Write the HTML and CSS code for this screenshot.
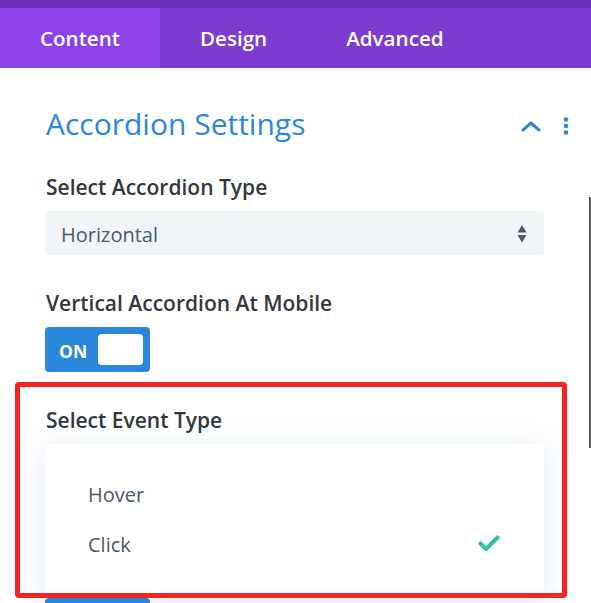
FILE: index.html
```html
<!DOCTYPE html>
<html lang="en">
<head>
<meta charset="utf-8">
<title>Accordion Settings</title>
<link rel="stylesheet" href="styles.css">
</head>
<body>
<div class="topstrip"></div>
<nav class="tabs">
  <div class="tab active">Content</div>
  <div class="tab">Design</div>
  <div class="tab">Advanced</div>
</nav>
<main class="panel">
  <header class="section-head">
    <h2 class="section-title">Accordion Settings</h2>
    <div class="head-icons">
      <svg class="chev" width="20" height="12" viewBox="0 0 20 12"><path d="M2 10 L10 3 L18 10" fill="none" stroke="#2b87da" stroke-width="3" stroke-linecap="round" stroke-linejoin="round"/></svg>
      <svg class="dots" width="6" height="18" viewBox="0 0 6 18"><circle cx="3" cy="2.5" r="2.3" fill="#2b87da"/><circle cx="3" cy="9" r="2.3" fill="#2b87da"/><circle cx="3" cy="15.5" r="2.3" fill="#2b87da"/></svg>
    </div>
  </header>

  <section class="field">
    <div class="label">Select Accordion Type</div>
    <div class="select">
      <span class="select-value">Horizontal</span>
      <svg class="updown" width="10" height="20" viewBox="0 0 10 20"><path d="M5 1 L9.5 8.5 L0.5 8.5 Z" fill="#4c5866"/><path d="M0.5 11 L9.5 11 L5 18.5 Z" fill="#4c5866"/></svg>
    </div>
  </section>

  <section class="field">
    <div class="label">Vertical Accordion At Mobile</div>
    <div class="toggle">
      <span class="toggle-text">ON</span>
      <span class="knob"></span>
    </div>
  </section>

  <section class="field">
    <div class="label">Select Event Type</div>
    <ul class="dropdown">
      <li class="option">Hover</li>
      <li class="option selected">Click
        <svg class="check" width="22" height="17" viewBox="0 0 22 17"><path d="M2.5 8.5 L8 14 L19.5 2.5" fill="none" stroke="#2ec4a6" stroke-width="4.2" stroke-linecap="round" stroke-linejoin="round"/></svg>
      </li>
    </ul>
    <div class="toggle peek"></div>
  </section>
</main>
<div class="scrollbar"></div>
<div class="highlight"></div>
</body>
</html>
```
FILE: styles.css
```css
* { box-sizing: border-box; }
html, body { margin: 0; padding: 0; }
body {
  width: 591px;
  height: 603px;
  overflow: hidden;
  background: #ffffff;
  font-family: "Open Sans", "Noto Sans", sans-serif;
  position: relative;
}
.topstrip { height: 8px; background: #6b2eb8; }
.tabs {
  display: flex;
  height: 60px;
  background: #7e3bd0;
}
.tab {
  padding: 0 39px 0 40px;
  line-height: 60px;
  font-size: 20.6px;
  font-weight: 600;
  color: #ffffff;
}
.tab.active { background: #8c42e9; padding: 0 40px; }

.panel { padding: 36px 47px 0 45px; }

.section-head {
  display: flex;
  align-items: center;
  justify-content: space-between;
  margin-right: -25px;
}
.section-title {
  margin: 0;
  font-size: 30px;
  line-height: 40px;
  font-weight: 400;
  color: #2b87da;
  padding-left: 1px;
}
.head-icons { display: flex; align-items: center; gap: 22px; padding-top: 3px; }
.chev { display: block; }
.dots { display: block; }

.field { margin-top: 29px; }
.field + .field { margin-top: 34px; }
.label {
  font-size: 21px;
  line-height: 28px;
  font-weight: 600;
  color: #32373c;
  padding-left: 1px;
}
.select {
  margin-top: 10px;
  height: 44px;
  background: #f1f5f9;
  border-radius: 4px;
  display: flex;
  align-items: center;
  justify-content: space-between;
  padding: 2px 17px 0 16px;
}
.select-value {
  font-size: 20px;
  font-weight: 500;
  color: #4c5866;
}
.updown { display: block; margin-top: -1px; }

.toggle {
  margin-top: 10px;
  width: 105px;
  height: 45px;
  background: #2b87da;
  border-radius: 4px;
  display: flex;
  align-items: center;
  justify-content: space-between;
  padding: 0 7px 0 14px;
}
.toggle-text {
  font-size: 17.5px;
  font-weight: 700;
  color: #ffffff;
  padding-top: 2px;
}
.knob {
  width: 45px;
  height: 31px;
  background: #ffffff;
  border-radius: 4px;
}

.dropdown {
  list-style: none;
  margin: 10px 0 0;
  padding: 26px 44px 27px 43px;
  background: #ffffff;
  border-radius: 4px;
  box-shadow: 0 4px 30px rgba(43, 120, 210, 0.14);
  position: relative;
  z-index: 1;
}
.option {
  height: 50px;
  line-height: 50px;
  font-size: 20px;
  font-weight: 500;
  color: #4c5866;
  display: flex;
  align-items: center;
  justify-content: space-between;
}
.check { display: block; margin-top: -4px; }
.toggle.peek { margin-top: 1px; }

.scrollbar {
  position: absolute;
  left: 589px;
  top: 197px;
  width: 2px;
  height: 251px;
  background: #5a5a5a;
}
.highlight {
  position: absolute;
  left: 15px;
  top: 382px;
  width: 552px;
  height: 216px;
  border: 5px solid #f22424;
  border-radius: 4px;
  z-index: 2;
  pointer-events: none;
}
```
